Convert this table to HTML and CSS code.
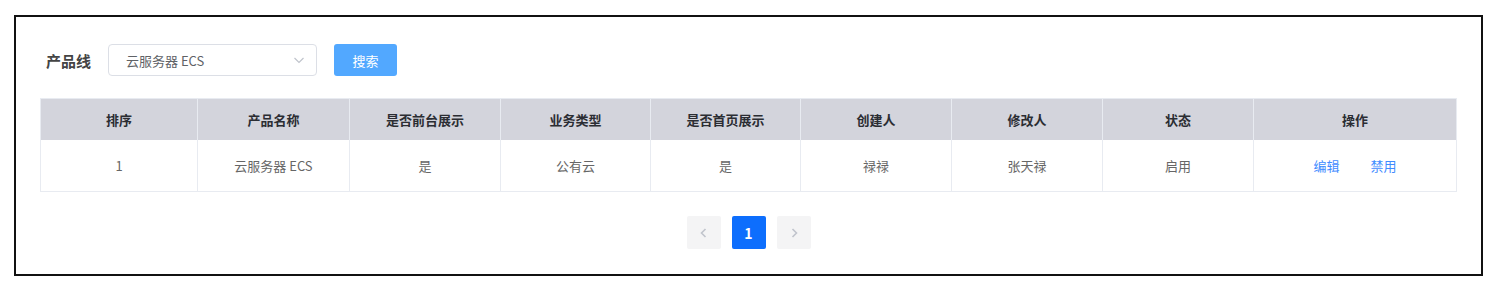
FILE: index.html
```html
<!DOCTYPE html>
<html lang="zh-CN">
<head>
    <meta charset="UTF-8">
    <meta name="viewport" content="width=device-width, initial-scale=1.0">
    <title>产品线管理</title>
    <link rel="stylesheet" href="styles.css">
</head>
<body>
    <div class="page">
        <div class="panel">
            <div class="toolbar">
                <span class="toolbar-label">产品线</span>
                <div class="select">
                    <span class="select-value">云服务器 ECS</span>
                    <svg class="select-arrow" width="12" height="12" viewBox="0 0 12 12">
                        <path d="M1.5 4 L6 8.5 L10.5 4" fill="none" stroke="#c0c4cc" stroke-width="1.2"/>
                    </svg>
                </div>
                <button type="button" class="btn-search">搜索</button>
            </div>

            <table class="grid">
                <colgroup>
                    <col style="width: 157px">
                    <col style="width: 152px">
                    <col style="width: 151px">
                    <col style="width: 150px">
                    <col style="width: 150px">
                    <col style="width: 151px">
                    <col style="width: 151px">
                    <col style="width: 151px">
                    <col>
                </colgroup>
                <thead>
                    <tr>
                        <th>排序</th>
                        <th>产品名称</th>
                        <th>是否前台展示</th>
                        <th>业务类型</th>
                        <th>是否首页展示</th>
                        <th>创建人</th>
                        <th>修改人</th>
                        <th>状态</th>
                        <th>操作</th>
                    </tr>
                </thead>
                <tbody>
                    <tr>
                        <td>1</td>
                        <td>云服务器 ECS</td>
                        <td>是</td>
                        <td>公有云</td>
                        <td>是</td>
                        <td>禄禄</td>
                        <td>张天禄</td>
                        <td>启用</td>
                        <td>
                            <a class="op-link" href="#">编辑</a>
                            <a class="op-link" href="#">禁用</a>
                        </td>
                    </tr>
                </tbody>
            </table>

            <div class="pager">
                <button type="button" class="pager-btn" disabled>
                    <svg width="12" height="12" viewBox="0 0 12 12"><path d="M7.5 2 L3.5 6 L7.5 10" fill="none" stroke="#c0c4cc" stroke-width="1.6"/></svg>
                </button>
                <button type="button" class="pager-btn active">1</button>
                <button type="button" class="pager-btn" disabled>
                    <svg width="12" height="12" viewBox="0 0 12 12"><path d="M4.5 2 L8.5 6 L4.5 10" fill="none" stroke="#c0c4cc" stroke-width="1.6"/></svg>
                </button>
            </div>
        </div>
    </div>
</body>
</html>
```

FILE: styles.css
```css
body {
    margin: 0;
    background: #fff;
    font-family: "Noto Sans CJK SC", "Liberation Sans", sans-serif;
    font-size: 13px;
    color: #606266;
}
.page {
    padding: 15px 0 0 14px;
}
.panel {
    width: 1469px;
    height: 261px;
    box-sizing: border-box;
    border: 2px solid #111;
    padding: 27px 24px 0 24px;
}
.toolbar {
    display: flex;
    align-items: center;
    gap: 17px;
    padding-left: 6px;
    height: 32px;
}
.toolbar-label {
    font-size: 15px;
    font-weight: bold;
    color: #444;
}
.select {
    width: 209px;
    height: 32px;
    box-sizing: border-box;
    border: 1px solid #dcdfe6;
    border-radius: 4px;
    display: flex;
    align-items: center;
    justify-content: space-between;
    padding: 0 11px 0 17px;
}
.select-value {
    color: #606266;
}
.btn-search {
    width: 63px;
    height: 32px;
    border: none;
    border-radius: 3px;
    background: #52a8ff;
    color: #fff;
    font-family: inherit;
    font-size: 13px;
    cursor: pointer;
}
.grid {
    margin-top: 22px;
    width: 1417px;
    border-collapse: collapse;
    table-layout: fixed;
    border: 1px solid #e8ebf1;
}
.grid th,
.grid td {
    text-align: center;
    border-left: 1px solid #e8ebf1;
    padding: 0;
}
.grid th {
    height: 41px;
    background: #d3d4dc;
    color: #2b2d33;
    font-weight: bold;
}
.grid td {
    height: 51px;
    color: #666;
}
.op-link {
    color: #3f8cff;
    text-decoration: none;
    margin: 0 14px;
}
.pager {
    display: flex;
    justify-content: center;
    gap: 11px;
    margin-top: 24px;
}
.pager-btn {
    width: 34px;
    height: 33px;
    border: none;
    border-radius: 2px;
    background: #f4f4f5;
    display: flex;
    align-items: center;
    justify-content: center;
    font-family: inherit;
    font-size: 14px;
    font-weight: bold;
    padding: 0;
}
.pager-btn.active {
    background: #0d6efd;
    color: #fff;
}
```
